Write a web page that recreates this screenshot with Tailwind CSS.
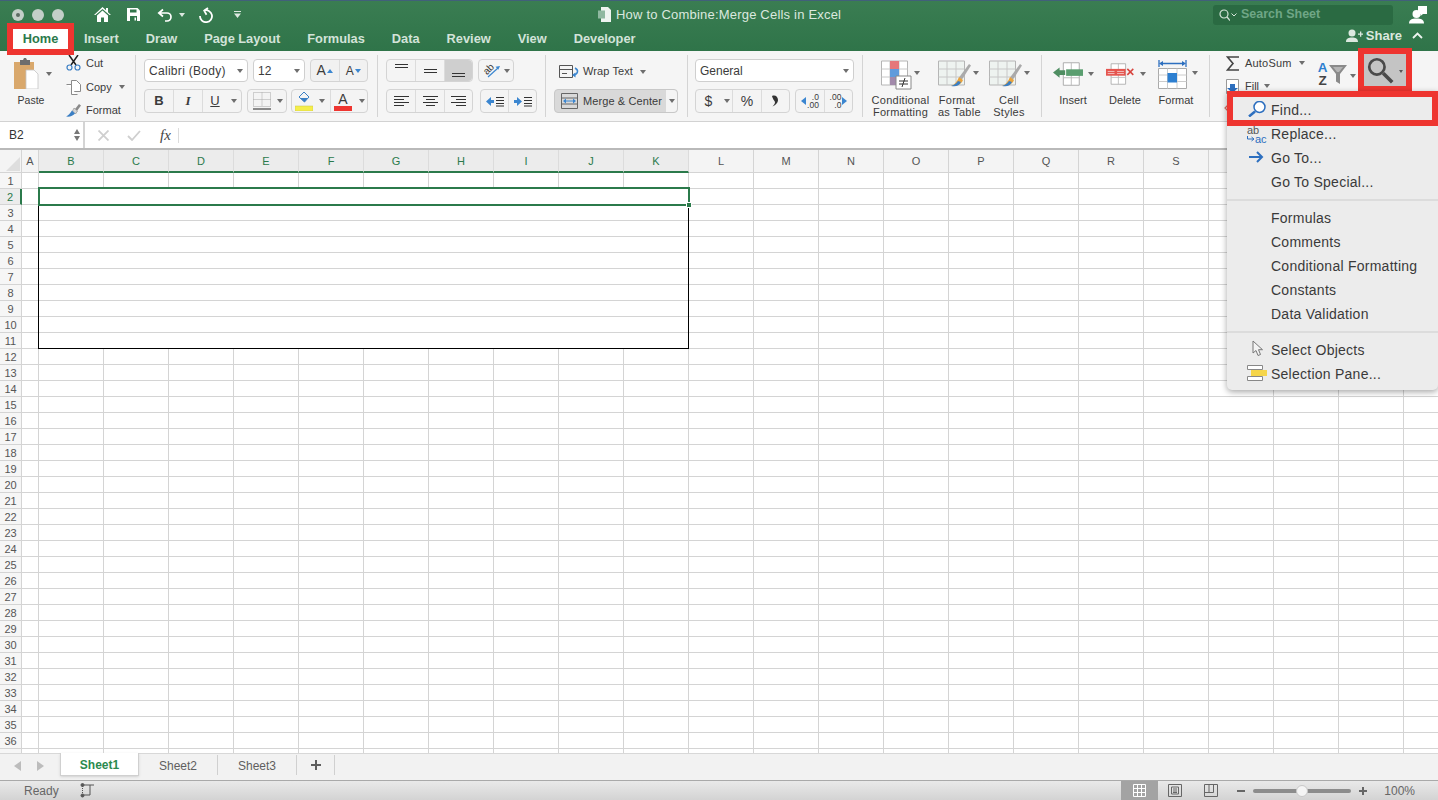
<!DOCTYPE html>
<html lang="en">
<head>
<meta charset="UTF-8">
<title>How to Combine:Merge Cells in Excel</title>
<script src="https://cdn.jsdelivr.net/npm/@tailwindcss/browser@4"></script>
</head>
<body class="overflow-hidden">
<div class="relative flex h-[800px] w-[1438px] flex-col overflow-hidden bg-white font-['Liberation_Sans',sans-serif] text-[11px] text-[#3b3b3b]">

  <!-- title bar + tabs -->
  <header class="h-[51px] shrink-0 border-t border-[#41607a] bg-gradient-to-b from-[#3a7d52] to-[#2f7449] text-white">
    <div class="flex h-[27px] items-center">
      <div class="flex w-[74px] shrink-0 gap-[8px] pl-[12px]">
        <span class="flex h-[12px] w-[12px] items-center justify-center rounded-full bg-[#c3cfc8]"><span class="h-[4px] w-[4px] rounded-full bg-[#5c6b62]"></span></span>
        <span class="h-[12px] w-[12px] rounded-full bg-[#c3cfc8]"></span>
        <span class="h-[12px] w-[12px] rounded-full bg-[#c3cfc8]"></span>
      </div>
      <div class="flex w-[180px] shrink-0 items-center pl-[20px]">
        <svg class="h-[16px] w-[17px]" viewBox="0 0 17 16"><path d="M8.500 0L0 8h1.500L8.500 2l7 6H17L14 5.200V1h-2v2.300zM3 8.500V15h4v-4.500h3V15h4V8.500L8.500 3.500z" fill="#fff"/></svg>
        <svg class="ml-[15px] h-[15px] w-[15px]" viewBox="0 0 15 15"><path d="M1 1h10.500L14 3.500V14H1z" fill="#fff"/><path d="M4 2.500h6.500v3H4zM4 9h7v5H4z" fill="#33774c"/><path d="M8.500 10.500h1.500v3h-1.500z" fill="#fff"/></svg>
        <svg class="ml-[16px] h-[14px] w-[16px]" viewBox="0 0 16 14" fill="none" stroke="#fff" stroke-width="1.700"><path d="M6 1.500L1.800 5 6 8.500M2 5h8a4 4 0 0 1 0 8H8"/></svg>
        <span class="ml-[6px] h-0 w-0 border-x-[3px] border-t-[4px] border-x-transparent border-t-[#dce8e0]"></span>
        <svg class="ml-[13px] h-[16px] w-[16px]" viewBox="0 0 16 16" fill="none" stroke="#fff" stroke-width="1.800"><path d="M6 3.500A6 6 0 1 1 2 9M10 1L6.200 3.600 8.500 7.800"/></svg>
        <svg class="ml-[19px] h-[9px] w-[9px]" viewBox="0 0 9 9"><path d="M1 1h7v1H1zM1 3.500h7L4.500 8z" fill="#dce8e0"/></svg>
      </div>
      <div class="flex flex-1 items-center pl-[343px]">
        <svg class="h-[15px] w-[15px]" viewBox="0 0 15 15"><path d="M4 0h7l3 3v12H4z" fill="#eef4f0"/><path d="M1 3.500h7v8H1z" fill="#8fb8a0"/></svg>
        <span class="ml-[4px] text-[13px] tracking-[0.2px] text-[#dbe8df]">How to Combine:Merge Cells in Excel</span>
      </div>
      <div class="mr-[16px] flex h-[20px] w-[180px] items-center rounded-[3px] bg-[#2a6a42] pl-[6px]">
        <svg class="h-[12px] w-[11px]" viewBox="0 0 11 12" fill="none" stroke="#d5e5da" stroke-width="1.200"><circle cx="5" cy="5" r="4"/><path d="M8 8l3 3.500"/></svg>
        <svg class="ml-[1px] h-[4px] w-[6px]" viewBox="0 0 6 4" fill="none" stroke="#d5e5da"><path d="M.5.500L3 3 5.500.500"/></svg>
        <span class="ml-[4px] text-[12.500px] font-bold text-[#6fa686]">Search Sheet</span>
      </div>
      <svg class="mr-[11px] h-[19px] w-[18px]" viewBox="0 0 18 19"><circle cx="7.500" cy="9" r="4" fill="#fff"/><path d="M0 18.500c0-4 3-5 7.500-5s7.500 1 7.500 5z" fill="#fff"/><path d="M9 1h9v8h-4l-2.500 2V9H9z" fill="#fff"/></svg>
    </div>
    <div class="relative z-10 flex h-[23px] items-start">
      <nav class="ml-[7px] mt-[1px] flex gap-[27px] text-[12.800px] font-bold text-[#d3e3d9]">
        <span class="-mt-[6px] -mr-[17px] box-border flex h-[32px] w-[67px] items-center justify-center border-[6px] border-[#ee3530] bg-white text-[#2b7a4b]">Home</span>
        <span>Insert</span><span>Draw</span><span>Page Layout</span><span>Formulas</span><span>Data</span><span>Review</span><span>View</span><span>Developer</span>
      </nav>
      <div class="ml-auto mr-[15px] -mt-[2px] flex items-center text-[13px] font-bold text-[#dbe8df]">
        <svg class="mr-[3px] h-[13px] w-[17px]" viewBox="0 0 17 13"><circle cx="6" cy="4" r="3.500" fill="#dbe8df"/><path d="M0 13c0-3.500 2.500-4.500 6-4.500s6 1 6 4.500zM12 4.500h2v-2h1.300v2h1.700v1.300h-1.700v2H14v-2h-2z" fill="#dbe8df"/></svg>
        <span>Share</span>
        <svg class="ml-[10px] h-[7px] w-[11px]" viewBox="0 0 11 7" fill="none" stroke="#eef4f0" stroke-width="1.800"><path d="M1 6l4.500-4.500L10 6"/></svg>
      </div>
    </div>
  </header>

  <!-- ribbon -->
  <section class="flex h-[71px] shrink-0 border-b border-[#d2d2d2] bg-[#f5f5f5] pt-[4px]">
    <!-- clipboard -->
    <div class="flex h-[62px] w-[136px] shrink-0 border-r border-[#d4d4d4] pl-[14px]">
      <div class="w-[52px] shrink-0 pt-[3px]">
        <div class="flex items-center">
          <svg class="h-[31px] w-[25px]" viewBox="0 0 25 31"><path d="M0 4h20v27H0z" fill="#d9a86c"/><path d="M6 2h3l1-2h2l1 2h3v5H6z" fill="#6d6d6d"/><path d="M12 12h8l4 4v15H12z" fill="#fff" stroke="#c4c4c4" stroke-width=".8"/></svg>
          <span class="ml-[7px] h-0 w-0 border-x-[3px] border-t-[4px] border-x-transparent border-t-[#6e6e6e]"></span>
        </div>
        <div class="mt-[4px] w-[34px] text-center text-[10.500px]">Paste</div>
      </div>
      <div class="-mt-[4px] flex flex-col">
        <div class="flex h-[24px] shrink-0 items-center">
          <svg class="h-[16px] w-[15px]" viewBox="0 0 15 16" fill="none"><path d="M3 0l7 10M12 0L5 10" stroke="#222" stroke-width="1.500"/><circle cx="3.500" cy="12.500" r="2.500" stroke="#3b7fc4" stroke-width="1.200"/><circle cx="11.500" cy="12.500" r="2.500" stroke="#3b7fc4" stroke-width="1.200"/></svg>
          <span class="ml-[5px]">Cut</span>
        </div>
        <div class="flex h-[24px] shrink-0 items-center">
          <svg class="h-[15px] w-[15px]" viewBox="0 0 15 15" fill="#fff" stroke="#8a8a8a"><path d="M5.500.500h5l4 4v7h-9z"/><path d="M.500 4.500h5v10h6"/></svg>
          <span class="ml-[5px]">Copy</span>
          <span class="ml-[7px] h-0 w-0 border-x-[3px] border-t-[4px] border-x-transparent border-t-[#6e6e6e]"></span>
        </div>
        <div class="flex h-[22px] shrink-0 items-center">
          <svg class="h-[14px] w-[15px]" viewBox="0 0 15 14"><path d="M9 6l4-5 2 1.500L11 8z" fill="#8a8a8a"/><path d="M8 5l3.500 3-2 3-3-3z" fill="#d5d5d5" stroke="#777" stroke-width=".5"/><path d="M6 7.500l3 3c-2 2.500-5 3.500-9 3 2.500-1 4-3 6-6z" fill="#3b7fc4"/></svg>
          <span class="ml-[5px]">Format</span>
        </div>
      </div>
    </div>
    <!-- font -->
    <div class="flex h-[62px] w-[242px] shrink-0 flex-col gap-[7px] border-r border-[#d4d4d4] pl-[8px] pt-[4px]">
      <div class="flex h-[23px] gap-[5px]">
        <div class="flex w-[104px] items-center rounded-[4px] border border-[#cfcfcf] bg-white pl-[4px] text-[12px] tracking-[0.3px]"><span class="flex-1">Calibri (Body)</span><span class="mr-[4px] h-0 w-0 border-x-[3px] border-t-[4px] border-x-transparent border-t-[#6e6e6e]"></span></div>
        <div class="flex w-[52px] items-center rounded-[4px] border border-[#cfcfcf] bg-white pl-[4px] text-[12px]"><span class="flex-1">12</span><span class="mr-[4px] h-0 w-0 border-x-[3px] border-t-[4px] border-x-transparent border-t-[#6e6e6e]"></span></div>
        <div class="flex w-[58px] rounded-[4px] border border-[#d4d4d4] bg-[#f1f1f1]">
          <div class="flex w-[29px] items-center justify-center border-r border-[#dcdcdc] text-[14px]">A<span class="ml-[1px] h-0 w-0 border-x-[3.500px] border-b-[4px] border-x-transparent border-b-[#3b86d0]"></span></div>
          <div class="flex w-[28px] items-center justify-center text-[12px]">A<span class="ml-[1px] h-0 w-0 border-x-[3.500px] border-t-[4px] border-x-transparent border-t-[#3b86d0]"></span></div>
        </div>
      </div>
      <div class="flex h-[24px]">
        <div class="flex w-[98px] rounded-[4px] border border-[#d4d4d4] bg-[#f4f4f4] text-[13px]">
          <span class="flex w-[29px] items-center justify-center border-r border-[#dcdcdc] font-bold">B</span>
          <span class="flex w-[29px] items-center justify-center border-r border-[#dcdcdc] font-['Liberation_Serif',serif] italic font-bold">I</span>
          <span class="flex w-[24px] items-center justify-center underline">U</span>
          <span class="flex flex-1 items-center justify-center"><span class="h-0 w-0 border-x-[3px] border-t-[4px] border-x-transparent border-t-[#6e6e6e]"></span></span>
        </div>
        <div class="ml-[5px] flex w-[40px] items-center rounded-[4px] border border-[#d4d4d4] bg-[#f4f4f4] pl-[5px]">
          <svg class="h-[18px] w-[18px]" viewBox="0 0 18 18" fill="none"><path d="M.500.500h17v14H.500zM9 .500v14M.500 7.500h17" stroke="#a8a8a8" stroke-dasharray="1 1"/><path d="M0 17h18" stroke="#222"/></svg>
          <span class="ml-[6px] h-0 w-0 border-x-[3px] border-t-[4px] border-x-transparent border-t-[#6e6e6e]"></span>
        </div>
        <div class="ml-[4px] flex w-[77px] items-center rounded-[4px] border border-[#d4d4d4] bg-[#f4f4f4]">
          <svg class="ml-[3px] h-[20px] w-[18px]" viewBox="0 0 18 20"><path d="M4 6l5-5 5 5-4.500 5z" fill="#f4f4f4" stroke="#3b7fc4"/><path d="M5 7l8 0-3.500 4z" fill="#3b7fc4"/><path d="M0 15h18v5H0z" fill="#f5ee4a" stroke="#c9c44a" stroke-width=".5"/></svg>
          <span class="ml-[6px] h-0 w-0 border-x-[3px] border-t-[4px] border-x-transparent border-t-[#6e6e6e]"></span>
          <div class="ml-[5px] flex h-full w-[25px] flex-col items-center justify-center border-l border-[#dcdcdc]">
            <span class="text-[14px] leading-[14px]">A</span><span class="h-[5px] w-[18px] bg-[#ee3530]"></span>
          </div>
          <span class="ml-[4px] h-0 w-0 border-x-[3px] border-t-[4px] border-x-transparent border-t-[#6e6e6e]"></span>
        </div>
      </div>
    </div>
    <!-- alignment -->
    <div class="flex h-[62px] w-[168px] shrink-0 flex-col gap-[7px] border-r border-[#d4d4d4] pl-[8px] pt-[4px]">
      <div class="flex h-[23px]">
        <div class="flex w-[87px] rounded-[4px] border border-[#d4d4d4] bg-[#f4f4f4]">
          <span class="flex w-[29px] justify-center border-r border-[#dcdcdc] pt-[4px]"><svg class="h-[4px] w-[13px]" viewBox="0 0 13 4"><path d="M0 .500h13M0 3.500h13" stroke="#333"/></svg></span>
          <span class="flex w-[29px] items-center justify-center border-r border-[#dcdcdc]"><svg class="h-[4px] w-[13px]" viewBox="0 0 13 4"><path d="M0 .500h13M0 3.500h13" stroke="#333"/></svg></span>
          <span class="flex flex-1 items-end justify-center rounded-r-[4px] bg-[#cfcfcf] pb-[4px]"><svg class="h-[4px] w-[13px]" viewBox="0 0 13 4"><path d="M0 .500h13M0 3.500h13" stroke="#333"/></svg></span>
        </div>
        <div class="relative ml-[5px] flex w-[36px] items-center rounded-[4px] border border-[#d4d4d4] bg-[#f4f4f4] pl-[5px]">
          <span class="-ml-[1px] mb-[3px] inline-block w-[12px] -rotate-45 text-[10px] leading-[10px]">ab</span>
          <svg class="absolute left-[6px] top-[5px] h-[14px] w-[16px]" viewBox="0 0 16 14"><path d="M3 12L13 3" stroke="#3b86d0" stroke-width="1.200"/><path d="M15 1l-4.500 .8 2.800 3z" fill="#3b86d0"/></svg>
          <span class="ml-[9px] h-0 w-0 border-x-[3px] border-t-[4px] border-x-transparent border-t-[#6e6e6e]"></span>
        </div>
      </div>
      <div class="flex h-[24px]">
        <div class="flex w-[87px] rounded-[4px] border border-[#d4d4d4] bg-[#f4f4f4]">
          <span class="flex w-[29px] items-center justify-center border-r border-[#dcdcdc]"><svg class="h-[11px] w-[15px]" viewBox="0 0 15 11"><path d="M0 .500h15M0 3.500h10M0 6.500h15M0 9.500h10" stroke="#333"/></svg></span>
          <span class="flex w-[29px] items-center justify-center border-r border-[#dcdcdc]"><svg class="h-[11px] w-[15px]" viewBox="0 0 15 11"><path d="M0 .500h15M3 3.500h9M0 6.500h15M3 9.500h9" stroke="#333"/></svg></span>
          <span class="flex flex-1 items-center justify-center"><svg class="h-[11px] w-[15px]" viewBox="0 0 15 11"><path d="M0 .500h15M5 3.500h10M0 6.500h15M5 9.500h10" stroke="#333"/></svg></span>
        </div>
        <div class="ml-[7px] flex w-[57px] rounded-[4px] border border-[#d4d4d4] bg-[#f4f4f4]">
          <span class="flex w-[28px] items-center justify-center border-r border-[#dcdcdc]"><svg class="h-[11px] w-[18px]" viewBox="0 0 18 11"><path d="M0 5.500L5 1v3h3v3H5v3z" fill="#3b86d0"/><path d="M10 1.500h8M10 4.500h8M10 7.500h8M10 10h8" stroke="#333"/></svg></span>
          <span class="flex flex-1 items-center justify-center"><svg class="h-[11px] w-[18px]" viewBox="0 0 18 11"><path d="M8 5.500L3 1v3H0v3h3v3z" fill="#3b86d0"/><path d="M10 1.500h8M10 4.500h8M10 7.500h8M10 10h8" stroke="#333"/></svg></span>
        </div>
      </div>
    </div>
    <!-- merge -->
    <div class="flex h-[62px] w-[142px] shrink-0 flex-col gap-[7px] border-r border-[#d4d4d4] pl-[8px] pt-[4px]">
      <div class="flex h-[23px] items-center pl-[5px] pt-[2px]">
        <svg class="h-[13px] w-[21px]" viewBox="0 0 21 13" fill="none"><path d="M.500.500h13v12H.500zM.500 4.500h13M3 8.500h5" stroke="#555"/><path d="M16 3c4 2 3 6-1 7" stroke="#3b86d0" stroke-width="1.500"/><path d="M13 10l3.500-2.500V12.500z" fill="#3b86d0"/></svg>
        <span class="ml-[3px] tracking-[0.1px]">Wrap Text</span>
        <span class="ml-[7px] h-0 w-0 border-x-[3px] border-t-[4px] border-x-transparent border-t-[#6e6e6e]"></span>
      </div>
      <div class="flex h-[24px] w-[124px] rounded-[4px] border border-[#c8c8c8] bg-[#d9d9d9]">
        <svg class="ml-[6px] mt-[3px] h-[16px] w-[17px]" viewBox="0 0 17 16" fill="none"><path d="M.500.500h16v15H.500zM.500 5h16M.500 11h16" stroke="#666"/><path d="M3 8h11" stroke="#3b86d0"/><path d="M2 8l3-2.500v5zM15 8l-3-2.500v5z" fill="#3b86d0"/></svg>
        <span class="ml-[5px] self-center pt-[1px] tracking-[0.1px]">Merge &amp; Center</span>
        <span class="ml-auto flex w-[11px] items-center justify-center rounded-r-[4px] bg-[#f4f4f4]"><span class="h-0 w-0 border-x-[3px] border-t-[4px] border-x-transparent border-t-[#6e6e6e]"></span></span>
      </div>
    </div>
    <!-- number -->
    <div class="flex h-[62px] w-[175px] shrink-0 flex-col gap-[7px] border-r border-[#d4d4d4] pl-[7px] pt-[4px]">
      <div class="flex h-[23px] w-[159px] items-center rounded-[4px] border border-[#cfcfcf] bg-white pl-[4px] text-[12px]"><span class="flex-1">General</span><span class="mr-[4px] h-0 w-0 border-x-[3px] border-t-[4px] border-x-transparent border-t-[#6e6e6e]"></span></div>
      <div class="flex h-[24px]">
        <div class="flex w-[95px] rounded-[4px] border border-[#d4d4d4] bg-[#f4f4f4] text-[14px]">
          <span class="flex w-[25px] items-center justify-center">$</span>
          <span class="flex w-[12px] items-center justify-center border-r border-[#dcdcdc]"><span class="h-0 w-0 border-x-[3px] border-t-[4px] border-x-transparent border-t-[#6e6e6e]"></span></span>
          <span class="flex w-[29px] items-center justify-center border-r border-[#dcdcdc]">%</span>
          <span class="flex flex-1 items-center justify-center"><svg class="h-[12px] w-[7px]" viewBox="0 0 7 12"><path d="M0 1c3-1.500 6 .5 6 4 0 3-3 5.500-5.500 6.500C3 9 3.500 7.500 2.500 6 2 5 1 4.500 0 1z" fill="#333"/></svg></span>
        </div>
        <div class="ml-[5px] flex w-[58px] rounded-[4px] border border-[#d4d4d4] bg-[#f4f4f4] text-[8.500px] leading-[8px]">
          <span class="flex w-[29px] items-center justify-center border-r border-[#dcdcdc]"><span class="mr-[1px] h-0 w-0 border-y-[4px] border-r-[5px] border-y-transparent border-r-[#3b86d0]"></span><span class="text-right">.0<br>.00</span></span>
          <span class="flex flex-1 items-center justify-center"><span class="text-right">.00<br>.0</span><span class="ml-[1px] h-0 w-0 border-y-[4px] border-l-[5px] border-y-transparent border-l-[#3b86d0]"></span></span>
        </div>
      </div>
    </div>
    <!-- styles -->
    <div class="flex h-[62px] w-[179px] shrink-0 border-r border-[#d4d4d4] leading-[12px] tracking-[0.25px]">
      <div class="w-[75px] shrink-0 text-center">
        <div class="flex h-[39px] items-start pl-[18px] pt-[5px]">
          <svg class="h-[30px] w-[31px]" viewBox="0 0 31 30"><path d="M.500 1h26v24H.500z" fill="#fff" stroke="#b5b5b5"/><path d="M9 1v24M18 1v24M.500 9h26M.500 17h26" stroke="#c8c8c8"/><path d="M9 1h9v8H9zM9 17h9v8H9z" fill="#e5787a"/><path d="M9 9h9v8H9z" fill="#5f9bdc"/><path d="M9 17h9v8H9z" fill="#5f9bdc" opacity=".5"/><path d="M15 16h15v13H15z" fill="#fff" stroke="#888"/><path d="M18 21h9M18 24h9M24 18l-3 9" stroke="#333"/></svg>
          <span class="ml-[2px] mt-[11px] h-0 w-0 border-x-[3px] border-t-[4px] border-x-transparent border-t-[#6e6e6e]"></span>
        </div>
        <div>Conditional<br>Formatting</div>
      </div>
      <div class="w-[51px] shrink-0">
        <div class="flex h-[39px] items-start pt-[5px]">
          <svg class="h-[30px] w-[34px]" viewBox="0 0 34 30"><path d="M.500 1h26v24H.500z" fill="#eef3f0" stroke="#b5b5b5"/><path d="M9 1v24M18 1v24M.500 9h26M.500 17h26" stroke="#c8c8c8"/><path d="M31 4l2 1.500-9 14-3-2z" fill="#aaa"/><path d="M21 17l4 3c-2 5-6 6-12 6 3-1 6-4 8-9z" fill="#e8a33d"/><path d="M13 26c3-1 5-2 7-5l3 1c-2 4-5 5-10 4z" fill="#3b7fc4"/></svg>
          <span class="ml-[1px] mt-[11px] h-0 w-0 border-x-[3px] border-t-[4px] border-x-transparent border-t-[#6e6e6e]"></span>
        </div>
        <div class="w-[38px] whitespace-nowrap text-center">Format<br>as Table</div>
      </div>
      <div class="flex-1">
        <div class="flex h-[39px] items-start pt-[5px]">
          <svg class="h-[30px] w-[34px]" viewBox="0 0 34 30"><path d="M.500 1h26v24H.500z" fill="#eef3f0" stroke="#b5b5b5"/><path d="M9 1v24M18 1v24M.500 9h26M.500 17h26" stroke="#c8c8c8"/><path d="M31 4l2 1.500-9 14-3-2z" fill="#aaa"/><path d="M21 17l4 3c-2 5-6 6-12 6 3-1 6-4 8-9z" fill="#e8a33d"/><path d="M13 26c3-1 5-2 7-5l3 1c-2 4-5 5-10 4z" fill="#3b7fc4"/></svg>
          <span class="ml-[1px] mt-[11px] h-0 w-0 border-x-[3px] border-t-[4px] border-x-transparent border-t-[#6e6e6e]"></span>
        </div>
        <div class="w-[40px] text-center">Cell<br>Styles</div>
      </div>
    </div>
    <!-- cells -->
    <div class="flex h-[62px] w-[168px] shrink-0 border-r border-[#d4d4d4] leading-[12px]">
      <div class="w-[52px] shrink-0 pl-[11px]">
        <div class="flex h-[39px] items-start pt-[6px]">
          <svg class="h-[26px] w-[32px]" viewBox="0 0 32 26"><path d="M11 1h17v24H11z" fill="#fff" stroke="#aaa"/><path d="M19.500 1v24M11 17h17" stroke="#bbb"/><path d="M14 8h18v7H14z" fill="#5a9e6f"/><path d="M0 11.500L7 6v3h6v5H7v3z" fill="#4f8e62"/></svg>
          <span class="ml-[5px] mt-[11px] h-0 w-0 border-x-[3px] border-t-[4px] border-x-transparent border-t-[#6e6e6e]"></span>
        </div>
        <div class="w-[40px] text-center">Insert</div>
      </div>
      <div class="w-[52px] shrink-0 pl-[12px]">
        <div class="flex h-[39px] items-start pt-[6px]">
          <svg class="h-[26px] w-[32px]" viewBox="0 0 34 26"><path d="M6 1h17v24H6z" fill="#fff" stroke="#aaa"/><path d="M14.500 1v24M6 17h17" stroke="#bbb"/><path d="M0 7h23v8H0z" fill="#e5554f"/><path d="M2 10h8M13 10h8M2 12.500h8M13 12.500h8" stroke="#f4d0ce"/><path d="M25 7l7 7M32 7l-7 7" stroke="#d8453f" stroke-width="1.800"/></svg>
          <span class="ml-[5px] mt-[11px] h-0 w-0 border-x-[3px] border-t-[4px] border-x-transparent border-t-[#6e6e6e]"></span>
        </div>
        <div class="w-[38px] text-center">Delete</div>
      </div>
      <div class="flex-1 pl-[12px]">
        <div class="flex h-[39px] items-start pt-[5px]">
          <svg class="h-[29px] w-[29px]" viewBox="0 0 29 29"><path d="M1 0v7M28 0v7M3 3.500h23" stroke="#2d6fbf" stroke-width="1.300"/><path d="M1 3.500l4-2.500v5zM28 3.500l-4-2.500v5z" fill="#2d6fbf"/><path d="M.500 8.500h28v20H.500z" fill="#fff" stroke="#aaa"/><path d="M9.500 8.500v20M19 8.500v20M.500 15h28M.500 21.500h28" stroke="#ccc"/><path d="M9.500 13h9.500v9.500H9.500z" fill="#2d7fd0"/></svg>
          <span class="ml-[5px] mt-[11px] h-0 w-0 border-x-[3px] border-t-[4px] border-x-transparent border-t-[#6e6e6e]"></span>
        </div>
        <div class="w-[36px] text-center">Format</div>
      </div>
    </div>
    <!-- editing -->
    <div class="flex h-[62px] flex-1 pl-[16px]">
      <div class="-mt-[4px] w-[89px] shrink-0">
        <div class="flex h-[24px] items-center">
          <svg class="h-[15px] w-[13px]" viewBox="0 0 13 15" fill="none" stroke="#444" stroke-width="1.600"><path d="M13 1H1.500L7 7.500 1.500 14H13"/></svg>
          <span class="ml-[6px] tracking-[0.2px]">AutoSum</span>
          <span class="ml-[7px] h-0 w-0 border-x-[3px] border-t-[4px] border-x-transparent border-t-[#6e6e6e]"></span>
        </div>
        <div class="flex h-[22px] items-center">
          <svg class="h-[15px] w-[13px]" viewBox="0 0 13 15"><path d="M.500.500h12v14H.500z" fill="#fff" stroke="#999"/><path d="M4 5h5v4h3l-5.500 5L1 9h3z" fill="#2d6fbf"/></svg>
          <span class="ml-[6px]">Fill</span>
          <span class="ml-[5px] h-0 w-0 border-x-[3px] border-t-[4px] border-x-transparent border-t-[#6e6e6e]"></span>
        </div>
        <svg class="-ml-[2px] mt-[6px] h-[10px] w-[6px]" viewBox="0 0 6 10" fill="none" stroke="#d8695f" stroke-width="1.200"><path d="M5 1L1 5l4 4"/></svg>
      </div>
      <div class="flex w-[46px] shrink-0 items-start pt-[6px]">
        <div class="flex w-[15px] flex-col items-center font-bold leading-[13px]"><span class="text-[13.500px] text-[#2d7fd0]">A</span><span class="text-[13.500px] text-[#444]">Z</span></div>
        <svg class="mt-[4px] -ml-[1px] h-[19px] w-[18px]" viewBox="0 0 18 19"><path d="M0 0h18L11 9v10l-4-2.500V9z" fill="#8a8a8a"/><path d="M4 2h10l-4 5H8z" fill="#b5b5b5"/></svg>
        <span class="ml-[3px] mt-[13px] h-0 w-0 border-x-[3px] border-t-[4px] border-x-transparent border-t-[#6e6e6e]"></span>
      </div>
    </div>
  </section>

  <!-- formula bar -->
  <div class="flex h-[28px] shrink-0 items-center border-b-2 border-[#b9b9b9] bg-white">
    <div class="flex h-full w-[85px] shrink-0 items-center border-r-2 border-[#d4d4d4] pl-[9px] text-[12px] text-[#333]">
      <span class="flex-1">B2</span>
      <span class="mr-[3px] flex flex-col gap-[2px]"><span class="h-0 w-0 border-x-[3.500px] border-b-[5px] border-x-transparent border-b-[#777]"></span><span class="h-0 w-0 border-x-[3.500px] border-t-[5px] border-x-transparent border-t-[#777]"></span></span>
    </div>
    <svg class="ml-[13px] h-[11px] w-[11px]" viewBox="0 0 11 11" fill="none" stroke="#cfcfcf" stroke-width="1.800"><path d="M.500.500l10 10M10.500.500l-10 10"/></svg>
    <svg class="ml-[18px] h-[11px] w-[14px]" viewBox="0 0 14 11" fill="none" stroke="#cfcfcf" stroke-width="1.800"><path d="M1 6l4 4 8-9"/></svg>
    <span class="ml-[19px] font-['Liberation_Serif',serif] text-[15px] italic text-[#444]">fx</span>
    <span class="ml-[7px] h-[15px] border-l border-[#dcdcdc]"></span>
  </div>

  <!-- column headers -->
  <div id="colhead" class="flex h-[23px] shrink-0 bg-[#f4f4f4]">
    <div class="relative h-[23px] w-[22px] shrink-0 border-r border-b border-[#d4d4d4]"><svg class="absolute bottom-[1px] right-[1px] h-[14px] w-[14px]" viewBox="0 0 14 14"><path d="M14 0v14H0z" fill="#dedede"/></svg></div>
  </div>

  <!-- grid -->
  <div class="relative h-[580px] shrink-0 overflow-hidden">
    <div id="sheet"></div>
    <div class="absolute left-[38px] top-[18px] h-[158px] w-[651px] border border-t-0 border-black"></div>
    <div class="absolute left-[38px] top-[14px] h-[19px] w-[652px] border-2 border-[#2b7a4b]"></div>
    <div class="absolute left-[686px] top-[29px] h-[6px] w-[6px] border border-white bg-[#2b7a4b]"></div>
  </div>

  <!-- sheet tabs -->
  <div class="flex h-[27px] shrink-0 border-t border-[#d8d8d8] bg-[#f2f2f2] text-[12px] text-[#5f5f5f]">
    <div class="flex w-[60px] shrink-0 items-center gap-[16px] pb-[3px] pl-[14px]">
      <span class="h-0 w-0 border-y-[5px] border-r-[7px] border-y-transparent border-r-[#bcbcbc]"></span>
      <span class="h-0 w-0 border-y-[5px] border-l-[7px] border-y-transparent border-l-[#bcbcbc]"></span>
    </div>
    <div class="-mt-[1px] flex h-[23px] w-[79px] items-center justify-center border-x border-b border-[#d0d0d0] bg-white pt-[1px] font-bold text-[#2b8a4f] shadow-sm">Sheet1</div>
    <div class="my-[1px] flex h-[20px] w-[79px] items-center justify-center border-r border-[#d0d0d0] pt-[1px]">Sheet2</div>
    <div class="my-[1px] flex h-[20px] w-[79px] items-center justify-center border-r border-[#d0d0d0] pt-[1px]">Sheet3</div>
    <div class="my-[1px] flex h-[20px] w-[38px] items-center justify-center border-r border-[#d0d0d0] text-[#5f5f5f]"><svg class="h-[10px] w-[10px]" viewBox="0 0 10 10"><path d="M4 0h2v4h4v2H6v4H4V6H0V4h4z" fill="#5f5f5f"/></svg></div>
  </div>

  <!-- status bar -->
  <footer class="flex h-[20px] shrink-0 items-center border-t border-[#a9a9a9] bg-gradient-to-b from-[#e9e9e9] to-[#d3d3d3] text-[12px] text-[#666]">
    <span class="ml-[24px]">Ready</span>
    <svg class="ml-[21px] h-[15px] w-[15px]" viewBox="0 0 15 15" fill="none" stroke="#555"><circle cx="2.500" cy="2" r="1.500" fill="#555"/><path d="M4 2h10M10 2v10M4 12h6"/><circle cx="2.500" cy="12.500" r="1.500" fill="#555"/><path d="M2.500 3v8" stroke-dasharray="1 1"/></svg>
    <div class="ml-auto flex h-full items-center">
      <span class="flex h-full w-[37px] items-center justify-center bg-[#a3a3a3]"><svg class="h-[13px] w-[13px]" viewBox="0 0 13 13" fill="none" stroke="#fff"><path d="M.500.500h12v12H.500zM4.500.500v12M8.500.500v12M.500 4.500h12M.500 8.500h12"/></svg></span>
      <span class="ml-[10px] h-[13px] w-[14px]"><svg class="h-[13px] w-[14px]" viewBox="0 0 14 13" fill="none" stroke="#666"><path d="M.500.500h13v12H.500zM3.500 3h7v7h-7zM5 5h4M5 7h4M5 8.500h4"/></svg></span>
      <span class="ml-[22px] h-[13px] w-[14px]"><svg class="h-[13px] w-[14px]" viewBox="0 0 14 13" fill="none" stroke="#666"><path d="M.500.500h13v12H.500zM.500 8.500h9V.500M5 .500v8"/></svg></span>
      <svg class="ml-[19px] h-[2px] w-[8px]" viewBox="0 0 8 2"><path d="M0 0h8v2H0z" fill="#666"/></svg>
      <div class="relative ml-[8px] h-[4px] w-[98px] rounded-full bg-[#8c8c8c]"><span class="absolute left-[43px] top-[-4px] h-[12px] w-[12px] rounded-full border border-[#c8c8c8] bg-[#f5f5f5]"></span></div>
      <svg class="ml-[8px] h-[8px] w-[8px]" viewBox="0 0 8 8"><path d="M3 0h2v3h3v2H5v3H3V5H0V3h3z" fill="#666"/></svg>
      <span class="ml-[17px] mr-[23px]">100%</span>
    </div>
  </footer>

  <!-- find button on ribbon -->
  <div class="absolute left-[1358px] top-[48px] flex h-[44px] w-[54px] items-center border-[6px] border-[#ee3530] bg-[#c4c4c4]">
    <svg class="ml-[3px] h-[27px] w-[27px]" viewBox="0 0 30 30" fill="none" stroke="#4a4a4a"><circle cx="11" cy="11" r="8.500" stroke-width="3"/><path d="M18 18l10 10" stroke-width="4"/></svg>
    <span class="ml-[5px] mt-[2px] h-0 w-0 border-x-[2.500px] border-t-[3px] border-x-transparent border-t-[#555]"></span>
  </div>

  <!-- find & select menu -->
  <div class="absolute left-[1227px] top-[91px] h-[299px] w-[211px] rounded-b-[5px] bg-[#ececec] text-[14px] tracking-[0.25px] text-[#3a3a3a] shadow-[0_2px_6px_rgba(0,0,0,0.35)]">
    <div class="-mb-[4px] box-border flex h-[35px] items-center border-[6px] border-[#ee3530] pl-[38px] pt-[3px]">Find...</div>
    <div class="flex h-[24px] items-center pl-[44px]">Replace...</div>
    <div class="flex h-[24px] items-center pl-[44px]">Go To...</div>
    <div class="flex h-[24px] items-center pl-[44px]">Go To Special...</div>
    <div class="mb-[5px] mt-[5px] border-t-2 border-[#dcdcdc]"></div>
    <div class="flex h-[24px] items-center pl-[44px]">Formulas</div>
    <div class="flex h-[24px] items-center pl-[44px]">Comments</div>
    <div class="flex h-[24px] items-center pl-[44px]">Conditional Formatting</div>
    <div class="flex h-[24px] items-center pl-[44px]">Constants</div>
    <div class="flex h-[24px] items-center pl-[44px]">Data Validation</div>
    <div class="mb-[5px] mt-[5px] border-t-2 border-[#dcdcdc]"></div>
    <div class="flex h-[24px] items-center pl-[44px]">Select Objects</div>
    <div class="flex h-[24px] items-center pl-[44px]">Selection Pane...</div>
    <!-- menu icons -->
    <svg class="absolute left-[21px] top-[10px] h-[16px] w-[18px]" viewBox="0 0 18 16" fill="none" stroke="#2d6fbf"><circle cx="11.500" cy="6" r="5.500" stroke-width="1.500" fill="#fff"/><path d="M7 10.500L1 15.500" stroke-width="2.500"/></svg>
    <div class="absolute left-[20px] top-[35px] h-[18px] w-[20px] text-[11px] leading-[9px] tracking-normal text-[#555]">ab<div class="flex items-center text-[#2d6fbf]"><svg class="h-[7px] w-[8px]" viewBox="0 0 8 7" fill="none" stroke="#2d6fbf"><path d="M.500 0v3h6M4.500 1l2.500 2-2.500 2"/></svg><span>ac</span></div></div>
    <svg class="absolute left-[22px] top-[60px] h-[12px] w-[15px]" viewBox="0 0 15 12" fill="none" stroke="#2d6fbf" stroke-width="2"><path d="M0 6h13M8 1l5 5-5 5"/></svg>
    <svg class="absolute left-[25px] top-[249px] h-[18px] w-[12px]" viewBox="0 0 12 18" fill="#f4f4f4" stroke="#777"><path d="M1 1v12l3-2.500 2 5 2.500-1-2-4.800h4z"/></svg>
    <svg class="absolute left-[20px] top-[274px] h-[16px] w-[20px]" viewBox="0 0 20 16"><path d="M.500.500h15v4h-15zM.500 11.500h15v4h-15z" fill="#fff" stroke="#888"/><path d="M4 5h16v6H4z" fill="#f5d54a"/></svg>
  </div>
</div>

<script>
  // build the worksheet: headers and rows
  const colNames = 'ABCDEFGHIJKLMNOPQRSTUVW'.split('');
  const colHead = document.getElementById('colhead');
  const sheet = document.getElementById('sheet');

  colNames.forEach((name, i) => {
    const cell = document.createElement('div');
    // letters behind the open menu do not show
    if (i < 19) cell.textContent = name;
    const picked = i >= 1 && i <= 10;
    const width = i === 0 ? 'w-[17px]' : 'w-[65px]';
    if (picked) {
      cell.className = width + ' shrink-0 h-[23px] flex items-center justify-center pt-[1px] text-[11px] border-r border-b-2 border-r-[#dcdcdc] border-b-[#2b7a4b] bg-[#ececec] text-[#2b7a4b]';
    } else {
      cell.className = width + ' shrink-0 h-[23px] flex items-center justify-center pt-[1px] text-[11px] border-r border-b border-[#d4d4d4] text-[#555]';
    }
    colHead.appendChild(cell);
  });

  for (let r = 1; r <= 37; r++) {
    const row = document.createElement('div');
    row.className = 'flex h-[16px]';
    const head = document.createElement('div');
    // row 37 is only a sliver above the tabs, its number does not show
    if (r < 37) head.textContent = r;
    if (r === 2) {
      head.className = 'w-[22px] shrink-0 h-[16px] flex items-center justify-center pt-[1px] text-[11px] border-r-2 border-b border-r-[#2b7a4b] border-b-[#d4d4d4] bg-[#ececec] text-[#2b7a4b]';
    } else {
      head.className = 'w-[22px] shrink-0 h-[16px] flex items-center justify-center pt-[1px] text-[11px] border-r border-b border-[#d4d4d4] bg-[#f6f6f6] text-[#555]';
    }
    row.appendChild(head);
    colNames.forEach((name, i) => {
      const cell = document.createElement('div');
      const width = i === 0 ? 'w-[17px]' : 'w-[65px]';
      // merged block B2:K11 has no inner vertical lines
      if (r >= 2 && r <= 11 && i >= 1 && i <= 9) {
        cell.className = width + ' shrink-0 border-b border-[#d4d4d4]';
      } else {
        cell.className = width + ' shrink-0 border-r border-b border-[#d4d4d4]';
      }
      row.appendChild(cell);
    });
    sheet.appendChild(row);
  }
</script>
</body>
</html>
